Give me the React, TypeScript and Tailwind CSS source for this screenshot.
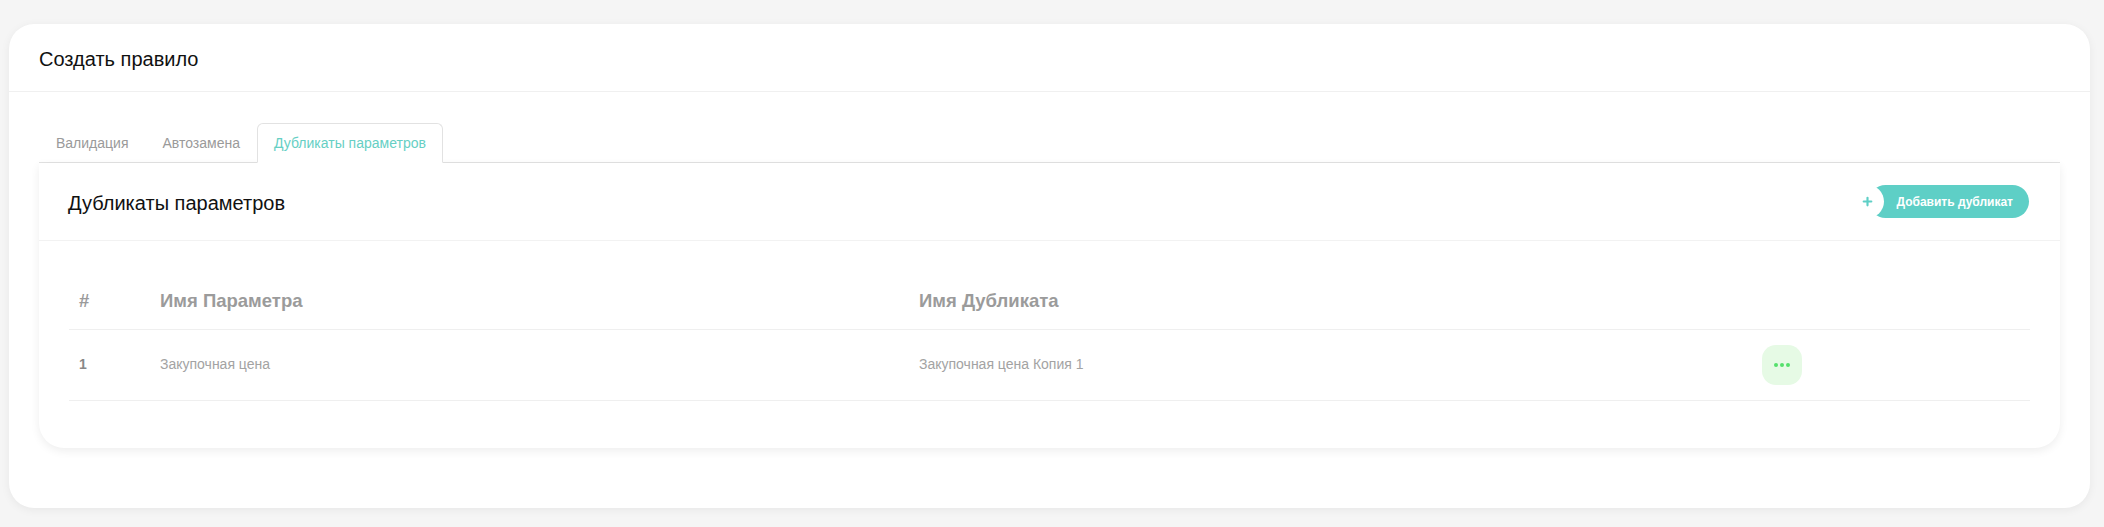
import { Plus } from 'lucide-react'

const rows = [{ id: 1, param: 'Закупочная цена', duplicate: 'Закупочная цена Копия 1' }]

export default function App() {
  return (
    <div className="min-h-[527px] bg-[#f5f5f5] pt-[24px] pb-[21px] pl-[9px] pr-[14px] font-['Liberation_Sans',Arial,sans-serif]">
      <div className="rounded-[25px] bg-white shadow-[0_2px_10px_rgba(0,0,0,0.06)]">
        {/* Header */}
        <div className="flex h-[68px] items-center border-b border-[#f0f0f0] px-[30px] pt-[3px]">
          <h1 className="text-[20px] text-[#111]">Создать правило</h1>
        </div>

        <div className="px-[30px] pt-[31px] pb-[60px]">
          {/* Tabs */}
          <div className="flex border-b border-[#e2e2e2]">
            <button className="mb-[-1px] h-[40px] border border-transparent px-4 text-[14px] text-[#9a9a9a]">Валидация</button>
            <button className="mb-[-1px] h-[40px] border border-transparent px-4 text-[14px] text-[#9a9a9a]">Автозамена</button>
            <button className="mb-[-1px] h-[40px] rounded-t-[6px] border border-[#e2e2e2] border-b-white bg-white px-4 text-[14px] text-[#66cfc4]">
              Дубликаты параметров
            </button>
          </div>

          {/* Inner card */}
          <div className="rounded-b-[25px] bg-white shadow-[0_3px_10px_rgba(0,0,0,0.07)]">
            <div className="flex h-[78px] items-center justify-between border-b border-[#f2f2f2] pl-[29px] pr-[31px]">
              <h2 className="pt-[3px] text-[20px] text-[#111]">Дубликаты параметров</h2>
              <button className="relative flex h-[33px] items-center rounded-full bg-[#5ecfc6] pl-[27px] pr-[16px] text-[12px] font-bold text-white">
                <span className="absolute left-[-18px] top-0 flex h-[33px] w-[33px] items-center justify-center rounded-full bg-white text-[#5ecfc6]">
                  <Plus size={13} strokeWidth={4} />
                </span>
                Добавить дубликат
              </button>
            </div>

            <div className="px-[30px] pt-[32px] pb-[47px]">
              <table className="w-full border-collapse text-left">
                <thead>
                  <tr className="h-[56px] border-b border-[#efefef] text-[18.5px] font-bold text-[#9b9b9b]">
                    <th className="w-[81px] px-[10px] font-bold">#</th>
                    <th className="w-[759px] px-[10px] font-bold">Имя Параметра</th>
                    <th className="w-[843px] px-[10px] font-bold">Имя Дубликата</th>
                    <th className="px-[10px]"></th>
                  </tr>
                </thead>
                <tbody>
                  {rows.map((row) => (
                    <tr key={row.id} className="h-[71px] border-b border-[#efefef] text-[14px] text-[#a3a3a3]">
                      <td className="px-[10px] font-bold text-[#888]">{row.id}</td>
                      <td className="px-[10px]">{row.param}</td>
                      <td className="px-[10px]">{row.duplicate}</td>
                      <td className="px-[10px]">
                        <button className="flex h-[40px] w-[40px] items-center justify-center gap-[2px] rounded-[14px] bg-[#e6fae5]">
                          <span className="h-[4px] w-[4px] rounded-full bg-[#55e06c]" />
                          <span className="h-[4px] w-[4px] rounded-full bg-[#55e06c]" />
                          <span className="h-[4px] w-[4px] rounded-full bg-[#55e06c]" />
                        </button>
                      </td>
                    </tr>
                  ))}
                </tbody>
              </table>
            </div>
          </div>
        </div>
      </div>
    </div>
  )
}
